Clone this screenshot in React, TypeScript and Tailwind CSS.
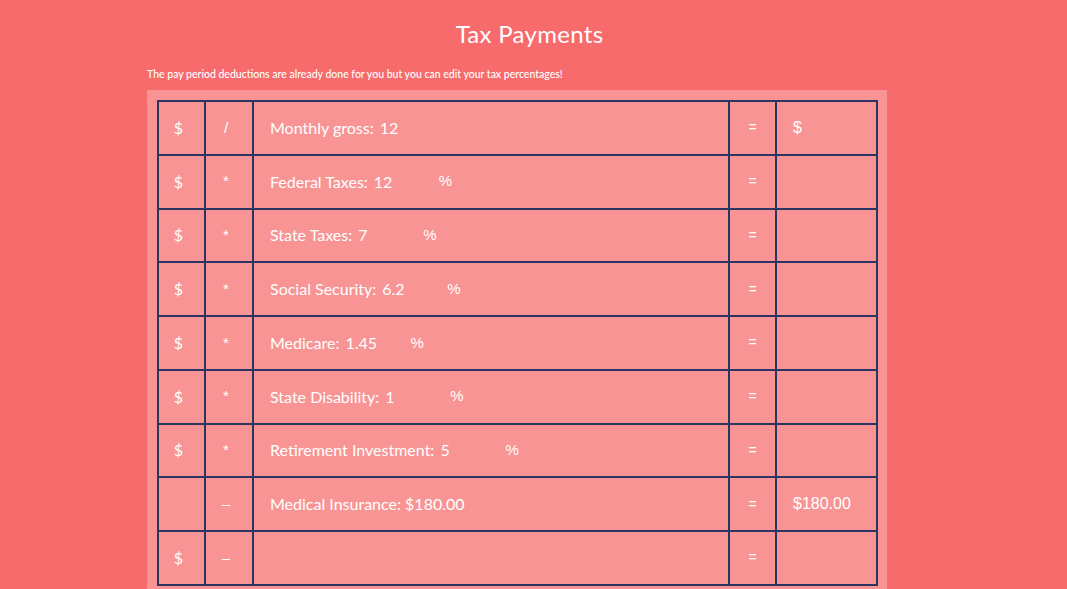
const rows = [
    { a: "$", op: "/", label: "Monthly gross:", value: "12", pct: false, result: "$" },
    { a: "$", op: "*", label: "Federal Taxes:", value: "12", pct: true, result: "" },
    { a: "$", op: "*", label: "State Taxes:", value: "7", pct: true, result: "" },
    { a: "$", op: "*", label: "Social Security:", value: "6.2", pct: true, result: "" },
    { a: "$", op: "*", label: "Medicare:", value: "1.45", pct: true, result: "" },
    { a: "$", op: "*", label: "State Disability:", value: "1", pct: true, result: "" },
    { a: "$", op: "*", label: "Retirement Investment:", value: "5", pct: true, result: "" },
    { a: "", op: "–", label: "Medical Insurance: $180.00", value: "", pct: false, result: "$180.00" },
    { a: "$", op: "–", label: "", value: "", pct: false, result: "" },
];

const cell = "border-2 border-[#2b3561] h-[53.75px] p-0";

export default function App() {
    return (
        <div className="min-h-[589px] bg-[#f76b6d] text-white font-['Lato',sans-serif]">
            <h1 className="text-center text-[24px] pt-[17px] pr-[8px] leading-[34px] tracking-[0.3px]">
                Tax Payments
            </h1>

            <p className="text-[10.5px] font-medium ml-[147px] mt-[17px] leading-[12px]">
                The pay period deductions are already done for you but you can edit your tax percentages!
            </p>

            <div className="ml-[147px] mt-[10px] w-[740px] bg-[#f99494] px-[10px] pt-[10px] pb-[10px]">
                <table className="border-collapse w-[721px] text-[16px]">
                    <tbody>
                        {rows.map((r, i) => (
                            <tr key={i}>
                                <td className={`${cell} w-[47px] text-center pr-[6px]`}>
                                    {r.a}
                                </td>
                                <td className={`${cell} w-[48px] text-center pr-[6px] font-['Liberation_Sans',sans-serif] text-[15px]`}>
                                    {r.op}
                                </td>
                                <td className={`${cell} pl-[16px]`}>
                                    <div className="flex items-center">
                                        <span>{r.label}</span>
                                        {r.value && (
                                            <span className="ml-[6px] w-[65px]">{r.value}</span>
                                        )}
                                        {r.pct && (
                                            <span className="font-['Liberation_Sans',sans-serif] text-[15px]">
                                                %
                                            </span>
                                        )}
                                    </div>
                                </td>
                                <td className={`${cell} w-[47px] text-center font-['Liberation_Sans',sans-serif] text-[14px]`}>
                                    =
                                </td>
                                <td className={`${cell} w-[101px] pl-[16px] font-['Liberation_Sans',sans-serif] text-[16px]`}>
                                    {r.result}
                                </td>
                            </tr>
                        ))}
                    </tbody>
                </table>
            </div>
        </div>
    );
}
